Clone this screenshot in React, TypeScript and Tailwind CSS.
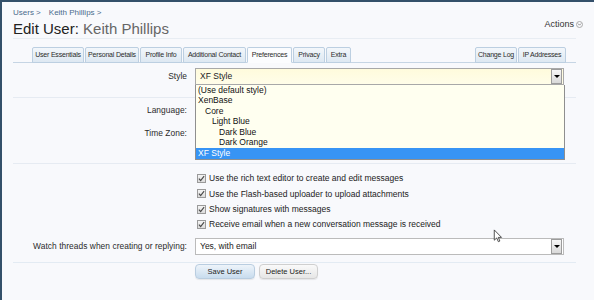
import { ChevronDown } from 'lucide-react';

const leftTabs = [
  { label: 'User Essentials', w: 'w-[52px]' },
  { label: 'Personal Details', w: 'w-[54px]' },
  { label: 'Profile Info', w: 'w-[42px]' },
  { label: 'Additional Contact', w: 'w-[63px]' },
  { label: 'Preferences', w: 'w-[45px]' },
  { label: 'Privacy', w: 'w-[32px]' },
  { label: 'Extra', w: 'w-[25px]' },
];
const rightTabs = [
  { label: 'Change Log', w: 'w-[42px]' },
  { label: 'IP Addresses', w: 'w-[48px]' },
];

const styles = [
  { label: '(Use default style)', depth: 0 },
  { label: 'XenBase', depth: 0 },
  { label: 'Core', depth: 1 },
  { label: 'Light Blue', depth: 2 },
  { label: 'Dark Blue', depth: 3 },
  { label: 'Dark Orange', depth: 3 },
  { label: 'XF Style', depth: 0, selected: true },
];

const options = [
  'Use the rich text editor to create and edit messages',
  'Use the Flash-based uploader to upload attachments',
  'Show signatures with messages',
  'Receive email when a new conversation message is received',
];

const indent = ['pl-[2px]', 'pl-[9px]', 'pl-[16px]', 'pl-[23px]'];

function Tab({ label, w, active }: { label: string; w: string; active?: boolean }) {
  return (
    <div
      className={`-mb-px flex h-[16px] ${w} items-center justify-center whitespace-nowrap rounded-t-[2px] border border-[#bccfe1] text-[7px] tracking-[-0.2px] text-[#2b2b2b] ${
        active ? 'border-b-[#fbfcfe] bg-[#fbfcfe]' : 'bg-gradient-to-b from-[#f3f7fb] to-[#dde8f2]'
      }`}
    >
      {label}
    </div>
  );
}

function ArrowButton() {
  return (
    <span className="grid h-[15px] w-[11px] place-items-center border border-[#9c9c9c] bg-gradient-to-b from-[#f6f6f6] to-[#d9d9d9]">
      <span className="h-0 w-0 border-x-[3px] border-t-[3px] border-x-transparent border-t-black" />
    </span>
  );
}

function Label({ children }: { children: string }) {
  return <div className="w-[174px] shrink-0 whitespace-nowrap text-right text-[8.4px] tracking-[0.05px] text-[#2a2a2a]">{children}</div>;
}

export default function App() {
  return (
    <div
      className="relative h-[300px] overflow-hidden border-l-2 border-t-2 border-[#34506a] bg-[#f8f9fc] pl-[11px] pr-[18px] pt-[6px] text-[#333]"
      style={{ fontFamily: '"Liberation Sans", Arial, sans-serif' }}
    >
      {/* breadcrumb */}
      <div className="-mt-px flex h-[12px] items-center gap-[8px] text-[8px] leading-[12px] text-[#4a6b8c]">
        <span>Users &gt;</span>
        <span>Keith Phillips &gt;</span>
      </div>

      {/* title */}
      <div className="mt-px flex h-[18px] items-center">
        <h1 className="flex-1 text-[15px] leading-[18px] text-[#222]">
          Edit User: <span className="text-[#666]">Keith Phillips</span>
        </h1>
        <div className="-mr-[7px] flex items-center gap-[2px] self-start text-[9px] leading-[9px] text-[#333]">
          Actions
          <span className="grid h-[7px] w-[7px] place-items-center rounded-full border border-[#aaa]">
            <ChevronDown size={5} strokeWidth={4} className="text-[#777]" />
          </span>
        </div>
      </div>
      <div className="h-px bg-[#e8edf3]" />

      {/* tabs */}
      <div className="mt-[8px] flex border-b border-[#c6d5e4] pl-[19px] pr-[10px]">
        <div className="flex gap-px">
          {leftTabs.map((t) => (
            <Tab key={t.label} label={t.label} w={t.w} active={t.label === 'Preferences'} />
          ))}
        </div>
        <div className="flex-1" />
        <div className="flex gap-px">
          {rightTabs.map((t) => (
            <Tab key={t.label} label={t.label} w={t.w} />
          ))}
        </div>
      </div>

      {/* style row */}
      <div className="relative mt-[5px] flex h-[17px] items-center gap-[8px]">
        <Label>Style</Label>
        <div className="flex h-[17px] w-[369px] items-center justify-between border border-[#a8a8a8] bg-gradient-to-b from-[#fffbdc] to-[#fffde9] pl-[4px] pr-px text-[8.5px] text-[#222]">
          XF Style
          <ArrowButton />
        </div>

        {/* open dropdown list */}
        <div className="absolute left-[182px] top-[17px] z-10 w-[370px] border border-t-0 border-[#8f8f8f] bg-[#fffff0] text-[8.5px] text-[#111]">
          {styles.map((s) => (
            <div
              key={s.label}
              className={`flex h-[10.5px] items-center ${indent[s.depth]} ${s.selected ? 'bg-[#3794f5] text-white' : ''}`}
            >
              {s.label}
            </div>
          ))}
        </div>
      </div>
      <div className="mt-[12px] h-px bg-[#e6ebf2]" />

      <div className="mt-[4px] flex h-[17px] items-center gap-[8px]">
        <Label>Language:</Label>
        <div className="h-[17px] w-[369px] border border-[#bbb] bg-white" />
      </div>
      <div className="mt-[6px] flex h-[17px] items-center gap-[8px]">
        <Label>Time Zone:</Label>
        <div className="h-[17px] w-[369px] border border-[#bbb] bg-white" />
      </div>
      <div className="mt-[21px] h-px bg-[#e6ebf2]" />

      {/* checkboxes */}
      <div className="mt-[7px] flex flex-col pl-[184px]">
        {options.map((o) => (
          <label key={o} className="flex h-[15.3px] items-center gap-[3px] text-[8.5px] text-[#222]">
            <span className="grid h-[9px] w-[9px] place-items-center border border-[#9a9a9a] bg-gradient-to-b from-[#f4f4f4] to-[#dcdcdc]">
              <svg viewBox="0 0 8 8" className="h-[7px] w-[7px]">
                <path d="M1 4.2 L3 6.3 L7 1.2" fill="none" stroke="#4a4a4a" strokeWidth="1.3" />
              </svg>
            </span>
            {o}
          </label>
        ))}
      </div>

      {/* watch threads */}
      <div className="mt-[6px] flex h-[17px] items-center gap-[8px]">
        <Label>Watch threads when creating or replying:</Label>
        <div className="flex h-[17px] w-[369px] items-center justify-between border border-[#bbb] bg-white pl-[4px] pr-px text-[8.5px] text-[#222]">
          Yes, with email
          <ArrowButton />
        </div>
      </div>
      <div className="mt-[7px] h-px bg-[#e3ebf3]" />

      {/* buttons */}
      <div className="mt-px flex gap-[4px] pl-[182px]">
        <button className="h-[15px] w-[60px] rounded-[4px] border border-[#b9cde0] bg-gradient-to-b from-[#eef4fa] to-[#c8dcee] text-[7.5px] text-[#222] shadow-[0_1px_1px_rgba(0,0,0,0.08)]">
          Save User
        </button>
        <button className="h-[15px] w-[59px] rounded-[4px] border border-[#cfcfcf] bg-gradient-to-b from-[#fafafa] to-[#e6e6e6] text-[7.5px] text-[#222] shadow-[0_1px_1px_rgba(0,0,0,0.08)]">
          Delete User...
        </button>
      </div>

      {/* mouse pointer */}
      <svg viewBox="0 0 10 15" className="absolute left-[491px] top-[227px] h-[14px] w-[10px]">
        <path d="M1 1 L1 12 L3.6 9.6 L5.4 13.6 L7 12.9 L5.3 9 L8.8 9 Z" fill="#fff" stroke="#333" strokeWidth="0.9" />
      </svg>
    </div>
  );
}
